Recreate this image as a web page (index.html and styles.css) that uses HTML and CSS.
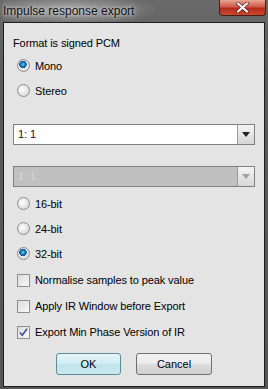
FILE: index.html
```html
<!DOCTYPE html>
<html lang="en">
  <head>
    <meta charset="UTF-8" />
    <title>Impulse response export</title>
    <link rel="stylesheet" href="styles.css">
  </head>
  <body>
    <div class="window">
      <div class="titlebar">
        <span class="title">Impulse response export</span>
        <button class="close-btn">
          <svg width="13" height="11" viewBox="0 0 13 11">
            <path d="M2 1.5 L11 9.5 M11 1.5 L2 9.5" stroke="#5a2018" stroke-width="3.6" stroke-linecap="round" />
            <path d="M2 1.5 L11 9.5 M11 1.5 L2 9.5" stroke="#fff" stroke-width="2.2" stroke-linecap="round" />
          </svg>
        </button>
      </div>
      <div class="content">
        <div class="label">Format is signed PCM</div>

        <div class="row"><span class="radio checked"></span>Mono</div>
        <div class="row"><span class="radio"></span>Stereo</div>

        <div class="combo">
          <span class="combo-text">1: 1</span>
          <span class="combo-btn"><span class="arrow"></span></span>
        </div>

        <div class="combo disabled">
          <span class="combo-text">1: 1</span>
          <span class="combo-btn"><span class="arrow"></span></span>
        </div>

        <div class="row bits"><span class="radio"></span>16-bit</div>
        <div class="row"><span class="radio"></span>24-bit</div>
        <div class="row"><span class="radio checked"></span>32-bit</div>

        <div class="row check-row first"><span class="checkbox"></span>Normalise samples to peak value</div>
        <div class="row check-row"><span class="checkbox"></span>Apply IR Window before Export</div>
        <div class="row check-row">
          <span class="checkbox">
            <svg width="11" height="11" viewBox="0 0 11 11">
              <path d="M2 5.5 L4.3 8.3 L9 1.8" fill="none" stroke="#3d4f9a" stroke-width="1.6" />
            </svg>
          </span>Export Min Phase Version of IR
        </div>

        <div class="buttons">
          <button class="btn default">OK</button>
          <button class="btn cancel">Cancel</button>
        </div>
      </div>
    </div>
  </body>
</html>
```

FILE: styles.css
```css
body {
  margin: 0;
  font-family: "Liberation Sans", Arial, sans-serif;
  font-size: 11px;
  color: #000;
  background-color: #3a3a3a;
}

.window {
  width: 268px;
  height: 389px;
  box-sizing: border-box;
  padding: 0 3px 2px 3px;
  display: flex;
  flex-direction: column;
  background: linear-gradient(to bottom, #6a6a6a, #5a5a5a 20%, #555 100%);
}

.titlebar {
  height: 22px;
  display: flex;
  align-items: flex-start;
  justify-content: space-between;
  background: radial-gradient(ellipse 90px 16px at 65px 10px, #a8a8a8, rgba(150, 150, 150, 0) 100%);
}

.title {
  margin-top: 4px;
  font-size: 12px;
  color: #111;
  text-shadow: 0 0 6px #cfcfcf, 0 0 3px #d8d8d8;
}

.close-btn {
  width: 47px;
  height: 16px;
  margin-right: -1px;
  padding: 0;
  border: 1px solid #4a1d17;
  border-top: none;
  border-radius: 0 0 4px 4px;
  background: linear-gradient(to bottom, #e8a58f, #d0584a 45%, #b62a1a 55%, #c9492f);
  display: flex;
  align-items: center;
  justify-content: center;
}

.content {
  flex: 1;
  background-color: #e4e4e4;
  border: 1px solid #1e1e1e;
  padding: 14px 9px 0 9px;
  display: flex;
  flex-direction: column;
  letter-spacing: -0.1px;
}

.label {
  line-height: 13px;
  height: 16px;
}

.row {
  height: 25px;
  display: flex;
  align-items: center;
  padding-left: 4px;
}

.radio {
  width: 11px;
  height: 11px;
  border: 1px solid #8c8c8c;
  border-radius: 50%;
  margin-right: 5px;
  background: radial-gradient(circle at 40% 40%, #ffffff, #dcdcdc 70%, #c8c8c8);
  flex-shrink: 0;
}

.radio.checked {
  background:
    radial-gradient(circle at 45% 40%, #6fd0f6 0, #1f7fc0 2px, #0f4f8a 3.5px, rgba(0, 0, 0, 0) 4px),
    radial-gradient(circle at 40% 40%, #ffffff, #dcdcdc 70%, #c8c8c8);
}

.combo {
  margin-top: 21px;
  height: 19px;
  border: 1px solid #808080;
  background-color: #fff;
  display: flex;
  align-items: stretch;
}

.combo-text {
  flex: 1;
  padding-left: 4px;
  line-height: 19px;
  color: #3a0030;
}

.combo-btn {
  width: 16px;
  border-left: 1px solid #9a9a9a;
  background: linear-gradient(to bottom, #f4f4f4, #d6d6d6);
  display: flex;
  align-items: center;
  justify-content: center;
}

.arrow {
  width: 0;
  height: 0;
  border-left: 4px solid transparent;
  border-right: 4px solid transparent;
  border-top: 5px solid #222;
}

.combo.disabled {
  margin-top: 21px;
  background-color: #c0c0c0;
}

.combo.disabled .combo-text {
  color: #d6d6d6;
}

.combo.disabled .arrow {
  border-top-color: #a0a0a0;
}

.bits {
  margin-top: 4px;
}

.check-row {
  height: 26px;
}

.check-row.first {
  margin-top: 1px;
}

.checkbox {
  width: 11px;
  height: 11px;
  border: 1px solid #8e8f8f;
  margin-right: 5px;
  background: linear-gradient(135deg, #dcdcdc, #f8f8f8);
  display: flex;
  align-items: center;
  justify-content: center;
  flex-shrink: 0;
}

.buttons {
  margin-top: 8px;
  display: flex;
  justify-content: center;
  gap: 15px;
}

.btn {
  height: 22px;
  padding: 0;
  border-radius: 3px;
  font-family: "Liberation Sans", Arial, sans-serif;
  font-size: 11px;
  color: #000;
}

.btn.default {
  width: 65px;
  border: 1px solid #5b8e99;
  background: linear-gradient(to bottom, #e4f5f8, #d0ecf2 50%, #bfe3ea 51%, #c9e8ee);
}

.btn.cancel {
  width: 76px;
  border: 1px solid #707070;
  background: linear-gradient(to bottom, #f2f2f2, #ebebeb 50%, #dddddd 51%, #cfcfcf);
}
```
